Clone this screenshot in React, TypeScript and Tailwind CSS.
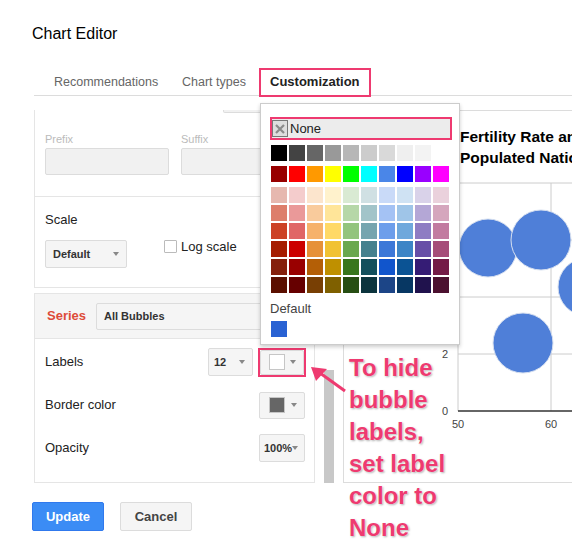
import React from "react";

const palette = [
  ["#000000", "#434343", "#666666", "#999999", "#b7b7b7", "#cccccc", "#d9d9d9", "#efefef", "#f3f3f3", "#ffffff"],
  ["#980000", "#ff0000", "#ff9900", "#ffff00", "#00ff00", "#00ffff", "#4a86e8", "#0000ff", "#9900ff", "#ff00ff"],
  ["#e6b8af", "#f4cccc", "#fce5cd", "#fff2cc", "#d9ead3", "#d0e0e3", "#c9daf8", "#cfe2f3", "#d9d2e9", "#ead1dc"],
  ["#dd7e6b", "#ea9999", "#f9cb9c", "#ffe599", "#b6d7a8", "#a2c4c9", "#a4c2f4", "#9fc5e8", "#b4a7d6", "#d5a6bd"],
  ["#cc4125", "#e06666", "#f6b26b", "#ffd966", "#93c47d", "#76a5af", "#6d9eeb", "#6fa8dc", "#8e7cc3", "#c27ba0"],
  ["#a61c00", "#cc0000", "#e69138", "#f1c232", "#6aa84f", "#45818e", "#3c78d8", "#3d85c6", "#674ea7", "#a64d79"],
  ["#85200c", "#990000", "#b45f06", "#bf9000", "#38761d", "#134f5c", "#1155cc", "#0b5394", "#351c75", "#741b47"],
  ["#5b0f00", "#660000", "#783f04", "#7f6000", "#274e13", "#0c343d", "#1c4587", "#073763", "#20124d", "#4c1130"],
];

// small grey triangle used in every dropdown
function Caret() {
  return <span className="ml-auto h-0 w-0 border-x-[3px] border-t-[4px] border-x-transparent border-t-[#888]" />;
}

function Dropdown({ children, className = "" }: { children?: React.ReactNode; className?: string }) {
  return (
    <div
      className={`flex items-center rounded-[2px] border border-[#dcdcdc] bg-[#f5f5f5] pr-[7px] text-[11px] font-bold text-[#333] ${className}`}
    >
      {children}
      <Caret />
    </div>
  );
}

function Swatch({ color }: { color: string }) {
  return <span className="h-[16px] w-[16px] border border-[#c6c6c6]" style={{ background: color }} />;
}

function Row({ label, children }: { label: string; children: React.ReactNode }) {
  return (
    <div className="flex h-[28px] items-center">
      <span className="flex-1 text-[13px]">{label}</span>
      {children}
    </div>
  );
}

function ColorRow({ colors }: { colors: string[] }) {
  return (
    <div className="flex gap-[2px]">
      {colors.map((c, i) => (
        <span key={i} className="h-[16px] w-[16px]" style={{ background: c }} />
      ))}
    </div>
  );
}

export default function App() {
  return (
    <div className="relative h-[548px] w-[572px] overflow-hidden bg-white font-['Liberation_Sans',Arial,sans-serif] text-[#222]">
      <h1 className="pl-[32px] pt-[24px] text-[16px] leading-[20px] text-black">Chart Editor</h1>

      {/* Tabs */}
      <div className="ml-[34px] mt-[24px] flex h-[28px] border-b border-[#dcdcdc] text-[12.5px] text-[#666]">
        <span className="ml-[20px] w-[108px] shrink-0 whitespace-nowrap leading-[28px]">Recommendations</span>
        <span className="ml-[20px] w-[66px] shrink-0 whitespace-nowrap leading-[28px]">Chart types</span>
        <span className="ml-[11px] h-[29px] w-[112px] shrink-0 whitespace-nowrap border-[2.5px] border-[#ee3a70] pl-[9px] text-[13px] font-bold leading-[24px] text-[#222]">
          Customization
        </span>
      </div>

      {/* Body */}
      <div className="ml-[34px] mt-[14px] flex h-[373px]">
        <div className="flex w-[281px] shrink-0 flex-col">
          <div className="h-[178px] border-x border-b border-[#e5e5e5]">
            <div className="ml-[188px] h-[3px] w-[82px] rounded-b-[2px] border-x border-b border-[#dcdcdc] bg-[#f1f1f1]" />
            <div className="mt-[19px] flex pl-[10px] text-[11px] leading-[14px] text-[#bbb]">
              <span className="w-[136px]">Prefix</span>
              <span>Suffix</span>
            </div>
            <div className="mt-[2px] flex gap-[12px] pl-[10px]">
              <div className="h-[27px] w-[124px] rounded-[2px] border border-[#dcdcdc] bg-[#f1f1f1]" />
              <div className="h-[27px] w-[124px] rounded-[2px] border border-[#dcdcdc] bg-[#f1f1f1]" />
            </div>
            <div className="mt-[21px] border-t border-[#e5e5e5]" />
            <div className="mt-[15px] pl-[10px] text-[13px] leading-[16px]">Scale</div>
            <div className="mt-[12px] flex items-start pl-[10px]">
              <Dropdown className="h-[28px] w-[82px] pl-[7px]">Default</Dropdown>
              <div className="ml-[37px] flex h-[13px] items-center">
                <span className="h-[13px] w-[13px] rounded-[1px] border border-[#bbb] bg-white" />
                <span className="ml-[4px] text-[13px]">Log scale</span>
              </div>
            </div>
          </div>

          <div className="mt-[5px] flex-1 border border-[#e5e5e5]">
            <div className="flex h-[45px] items-center border-b border-[#e5e5e5] bg-[#f5f5f5] pl-[12px] pr-[9px]">
              <span className="w-[49px] text-[13px] font-bold text-[#dd4b39]">Series</span>
              <Dropdown className="h-[27px] flex-1 pl-[7px]">All Bubbles</Dropdown>
            </div>
            <div className="flex flex-col gap-[15px] pl-[10px] pr-[9px] pt-[9px]">
              <Row label="Labels">
                <Dropdown className="mr-[5px] h-[28px] w-[45px] pl-[5px]">12</Dropdown>
                <div className="-mr-[1px] border-2 border-[#ee3a70]">
                  <Dropdown className="h-[25px] w-[44px] pl-[8px]">
                    <Swatch color="#ffffff" />
                  </Dropdown>
                </div>
              </Row>
              <Row label="Border color">
                <Dropdown className="h-[27px] w-[46px] pl-[9px]">
                  <Swatch color="#666666" />
                </Dropdown>
              </Row>
              <Row label="Opacity">
                <Dropdown className="h-[28px] w-[46px] pl-[4px]">100%</Dropdown>
              </Row>
            </div>
          </div>
        </div>

        {/* Scrollbar */}
        <div className="flex w-[28px] shrink-0 flex-col justify-end pl-[9px]">
          <div className="h-[113px] w-[10px] bg-[#c8c8c8]" />
        </div>

        {/* Chart preview */}
        <div className="flex-1 overflow-hidden border-y border-l border-[#dcdcdc]">
          <div className="whitespace-nowrap pl-[116px] pt-[15px] text-[15.5px] font-bold leading-[21px] text-black">
            <div>Fertility Rate and Life Expectancy</div>
            <div>Populated Nations</div>
          </div>
          <svg width="260" height="313" className="block">
            {[15, 72, 129, 186].map((y) => (
              <line key={y} x1="114" x2="260" y1={y} y2={y} stroke="#cccccc" />
            ))}
            <line x1="207" x2="207" y1="15" y2="243" stroke="#cccccc" />
            <line x1="114" x2="114" y1="15" y2="243" stroke="#cccccc" />
            <g fill="#4f7fd8" stroke="#d7e0f0" strokeWidth="1">
              <circle cx="144" cy="80" r="29" />
              <circle cx="197" cy="72" r="30" />
              <circle cx="243" cy="119" r="29" />
              <circle cx="179" cy="175" r="30" />
            </g>
            <line x1="114" x2="260" y1="243" y2="243" stroke="#333333" strokeWidth="1.5" />
            <g fontSize="11" fill="#444" fontFamily="Liberation Sans, Arial, sans-serif">
              <text x="104" y="19" textAnchor="end">8</text>
              <text x="104" y="76" textAnchor="end">6</text>
              <text x="104" y="133" textAnchor="end">4</text>
              <text x="104" y="190" textAnchor="end">2</text>
              <text x="104" y="247" textAnchor="end">0</text>
              <text x="114" y="260" textAnchor="middle">50</text>
              <text x="207" y="260" textAnchor="middle">60</text>
            </g>
          </svg>
        </div>
      </div>

      {/* Buttons */}
      <div className="ml-[32px] mt-[19px] flex gap-[16px] text-[13px] font-bold">
        <button className="h-[29px] w-[72px] rounded-[2px] border border-[#3079ed] bg-[#3b8cf5] text-white">Update</button>
        <button className="h-[29px] w-[72px] rounded-[2px] border border-[#dcdcdc] bg-[#f5f5f5] text-[#444]">Cancel</button>
      </div>

      {/* Colour picker menu */}
      <div className="absolute left-[260px] top-[103px] z-10 h-[242px] w-[200px] border border-[#ccc] bg-white pl-[9px] pt-[13px] shadow-[0_2px_4px_rgba(0,0,0,0.2)]">
        <div className="flex h-[23px] w-[182px] items-center border-2 border-[#ee3a70] bg-[#ececec]">
          <span className="flex h-[17px] w-[16px] items-center justify-center border border-[#777] bg-[#dedede]">
            <svg width="12" height="12" viewBox="0 0 12 12">
              <path d="M2 2 L10 10 M10 2 L2 10" stroke="#8a8a8a" strokeWidth="2.2" />
            </svg>
          </span>
          <span className="ml-[2px] text-[13px] leading-none text-[#222]">None</span>
        </div>
        <div className="ml-[1px] mt-[5px]">
          <ColorRow colors={palette[0]} />
          <div className="mt-[5px]">
            <ColorRow colors={palette[1]} />
          </div>
          <div className="mt-[5px] flex flex-col gap-[2px]">
            {palette.slice(2).map((r, i) => (
              <ColorRow key={i} colors={r} />
            ))}
          </div>
        </div>
        <div className="mt-[8px] text-[13px] leading-[16px] text-[#444]">Default</div>
        <div className="ml-[1px] mt-[4px] h-[16px] w-[16px] bg-[#2962d3]" />
      </div>

      {/* Annotation */}
      <svg className="absolute left-[305px] top-[360px]" width="45" height="35" viewBox="0 0 45 35">
        <line x1="15" y1="13" x2="40" y2="31" stroke="#ee3a70" strokeWidth="3" />
        <polygon points="6,7 22,9 11,21" fill="#ee3a70" />
      </svg>
      <div className="absolute left-[349px] top-[352px] text-[24px] font-bold leading-[32px] text-[#ee3a70] [text-shadow:0_0_2px_#fff,1px_1px_2px_rgba(0,0,0,0.35)]">
        <div>To hide</div>
        <div>bubble</div>
        <div>labels,</div>
        <div>set label</div>
        <div>color to</div>
        <div>None</div>
      </div>
    </div>
  );
}
